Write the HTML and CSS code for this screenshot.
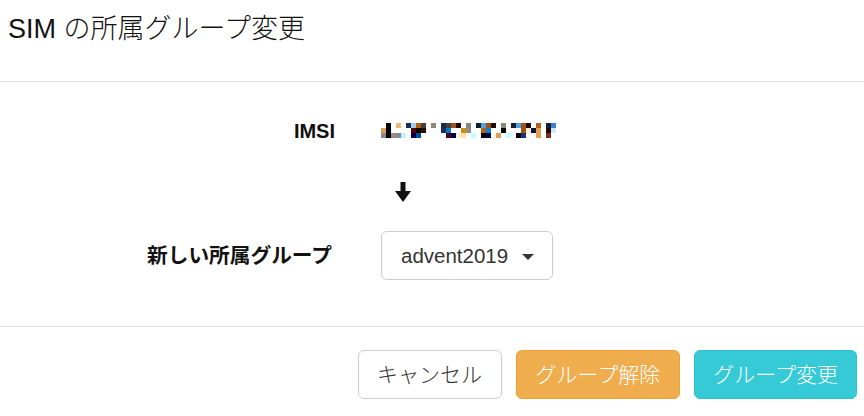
FILE: index.html
```html
<!DOCTYPE html>
<html lang="ja">
<head>
<meta charset="utf-8">
<title>SIM の所属グループ変更</title>
<link rel="stylesheet" href="styles.css">
</head>
<body>
<div class="modal">
  <div class="modal-header">
    <h4 class="modal-title">SIM の所属グループ変更</h4>
  </div>
  <div class="modal-body">
    <div class="row row-imsi">
      <div class="label">IMSI</div>
      <div class="value">
        <svg class="mosaic" width="175" height="15" viewBox="0 0 175 15" aria-label="IMSI">
          <rect x="5" y="0" width="5" height="5" fill="#000"/>
          <rect x="15" y="0" width="5" height="5" fill="#f0b878"/>
          <rect x="25" y="0" width="5" height="5" fill="#1a2a50"/>
          <rect x="30" y="0" width="5" height="5" fill="#a0d0f0"/>
          <rect x="35" y="0" width="5" height="5" fill="#b06010"/>
          <rect x="40" y="0" width="5" height="5" fill="#404040"/>
          <rect x="50" y="0" width="5" height="5" fill="#8a8a7a"/>
          <rect x="60" y="0" width="5" height="5" fill="#1a2a40"/>
          <rect x="65" y="0" width="5" height="5" fill="#404040"/>
          <rect x="70" y="0" width="5" height="5" fill="#a05020"/>
          <rect x="75" y="0" width="5" height="5" fill="#200808"/>
          <rect x="85" y="0" width="5" height="5" fill="#808888"/>
          <rect x="95" y="0" width="5" height="5" fill="#102030"/>
          <rect x="100" y="0" width="5" height="5" fill="#50a0e0"/>
          <rect x="105" y="0" width="5" height="5" fill="#a05020"/>
          <rect x="110" y="0" width="5" height="5" fill="#200808"/>
          <rect x="120" y="0" width="5" height="5" fill="#8a8a7a"/>
          <rect x="130" y="0" width="5" height="5" fill="#102030"/>
          <rect x="135" y="0" width="5" height="5" fill="#50a0e0"/>
          <rect x="140" y="0" width="5" height="5" fill="#a05020"/>
          <rect x="145" y="0" width="5" height="5" fill="#200808"/>
          <rect x="155" y="0" width="5" height="5" fill="#b06020"/>
          <rect x="165" y="0" width="5" height="5" fill="#102030"/>
          <rect x="170" y="0" width="5" height="5" fill="#4080d0"/>

          <rect x="0" y="5" width="5" height="5" fill="#d9a05c"/>
          <rect x="5" y="5" width="5" height="5" fill="#000"/>
          <rect x="30" y="5" width="5" height="5" fill="#500808"/>
          <rect x="35" y="5" width="5" height="5" fill="#000"/>
          <rect x="40" y="5" width="5" height="5" fill="#200808"/>
          <rect x="60" y="5" width="5" height="5" fill="#1a3060"/>
          <rect x="65" y="5" width="5" height="5" fill="#0878c8"/>
          <rect x="80" y="5" width="5" height="5" fill="#c89010"/>
          <rect x="85" y="5" width="5" height="5" fill="#909080"/>
          <rect x="100" y="5" width="5" height="5" fill="#b06010"/>
          <rect x="105" y="5" width="5" height="5" fill="#0880d0"/>
          <rect x="120" y="5" width="5" height="5" fill="#000"/>
          <rect x="140" y="5" width="5" height="5" fill="#a05010"/>
          <rect x="145" y="5" width="5" height="5" fill="#fff0d0"/>
          <rect x="150" y="5" width="5" height="5" fill="#101040"/>
          <rect x="155" y="5" width="5" height="5" fill="#e8a050"/>
          <rect x="165" y="5" width="5" height="5" fill="#200808"/>
          <rect x="170" y="5" width="5" height="5" fill="#d0e8ff"/>

          <rect x="0" y="10" width="5" height="5" fill="#8a8a8a"/>
          <rect x="5" y="10" width="5" height="5" fill="#000"/>
          <rect x="10" y="10" width="5" height="5" fill="#9a8a8a"/>
          <rect x="15" y="10" width="5" height="5" fill="#8a8a8a"/>
          <rect x="20" y="10" width="5" height="5" fill="#c0f0ff"/>
          <rect x="30" y="10" width="5" height="5" fill="#000050"/>
          <rect x="35" y="10" width="5" height="5" fill="#0050a0"/>
          <rect x="65" y="10" width="5" height="5" fill="#500010"/>
          <rect x="70" y="10" width="5" height="5" fill="#000050"/>
          <rect x="75" y="10" width="5" height="5" fill="#fff0d0"/>
          <rect x="80" y="10" width="5" height="5" fill="#ffe0a0"/>
          <rect x="90" y="10" width="5" height="5" fill="#c0ffff"/>
          <rect x="100" y="10" width="5" height="5" fill="#000"/>
          <rect x="105" y="10" width="5" height="5" fill="#000050"/>
          <rect x="110" y="10" width="5" height="5" fill="#fff8e0"/>
          <rect x="115" y="10" width="5" height="5" fill="#d8a060"/>
          <rect x="125" y="10" width="5" height="5" fill="#c0ffff"/>
          <rect x="135" y="10" width="5" height="5" fill="#000"/>
          <rect x="140" y="10" width="5" height="5" fill="#103080"/>
          <rect x="155" y="10" width="5" height="5" fill="#e8a050"/>
          <rect x="165" y="10" width="5" height="5" fill="#803010"/>
        </svg>
      </div>
    </div>
    <div class="row row-arrow">
      <div class="label"></div>
      <div class="value">
        <svg class="arrow" width="16" height="20" viewBox="0 0 16 20">
          <path d="M5.5 0 H10.5 V9 H16 L8 20 L0 9 H5.5 Z" fill="#111"/>
        </svg>
      </div>
    </div>
    <div class="row row-group">
      <div class="label label-ja">新しい所属グループ</div>
      <div class="value">
        <button class="select" type="button">advent2019<span class="caret"></span></button>
      </div>
    </div>
  </div>
  <div class="modal-footer">
    <button class="btn btn-default" type="button">キャンセル</button>
    <button class="btn btn-warning" type="button">グループ解除</button>
    <button class="btn btn-info" type="button">グループ変更</button>
  </div>
</div>
</body>
</html>
```
FILE: styles.css
```css
html, body {
  margin: 0;
  padding: 0;
  background: #fff;
}

body {
  font-family: "Liberation Sans", "Noto Sans CJK JP", sans-serif;
  font-size: 20px;
  color: #333;
}

.modal {
  width: 864px;
  height: 416px;
  overflow: hidden;
}

.modal-header {
  padding: 11px 8px 33px;
  border-bottom: 1px solid #e5e5e5;
}

.modal-title {
  margin: 0;
  font-size: 27px;
  font-weight: 300;
  line-height: 37px;
  height: 37px;
  color: #111;
}

.modal-body {
  padding: 35px 0 46px;
  border-bottom: 1px solid #e5e5e5;
}

.row {
  display: flex;
  align-items: center;
}

.label {
  width: 335px;
  text-align: right;
  font-weight: bold;
  line-height: 28px;
  color: #111;
}

.label-ja {
  width: 332px;
  padding-right: 3px;
  font-size: 20.7px;
}

.value {
  margin-left: 46px;
}

.row-imsi {
  height: 28px;
}

.mosaic {
  display: block;
  margin-top: -1px;
}

.row-arrow {
  margin-top: 37px;
  height: 20px;
}

.arrow {
  display: block;
  margin-left: 14px;
}

.row-group {
  margin-top: 29px;
}

.select {
  display: flex;
  align-items: center;
  height: 49px;
  padding: 0 18px 0 19px;
  border: 1px solid #ccc;
  border-radius: 6px;
  background: #fff;
  font-family: "Liberation Sans", "Noto Sans CJK JP", sans-serif;
  font-size: 20.5px;
  color: #333;
}

.caret {
  display: inline-block;
  width: 0;
  height: 0;
  margin-left: 14px;
  margin-top: 3px;
  border-top: 6px solid #333;
  border-left: 6px solid transparent;
  border-right: 6px solid transparent;
}

.modal-footer {
  display: flex;
  justify-content: flex-end;
  gap: 14px;
  padding: 23px 7px 0 0;
}

.btn {
  height: 49px;
  padding: 0 19px;
  border: 1px solid transparent;
  border-radius: 6px;
  font-family: "Liberation Sans", "Noto Sans CJK JP", sans-serif;
  font-size: 21px;
  font-weight: 300;
  line-height: 29px;
}

.btn-default {
  padding: 0 18.5px;
  background: #fff;
  border-color: #ccc;
  color: #333;
}

.btn-warning {
  background: #f0ad4e;
  border-color: #eea236;
  color: #fff;
}

.btn-info {
  padding: 0 18px;
  background: #35cad6;
  border-color: #2ec2ce;
  color: #fff;
}
```
